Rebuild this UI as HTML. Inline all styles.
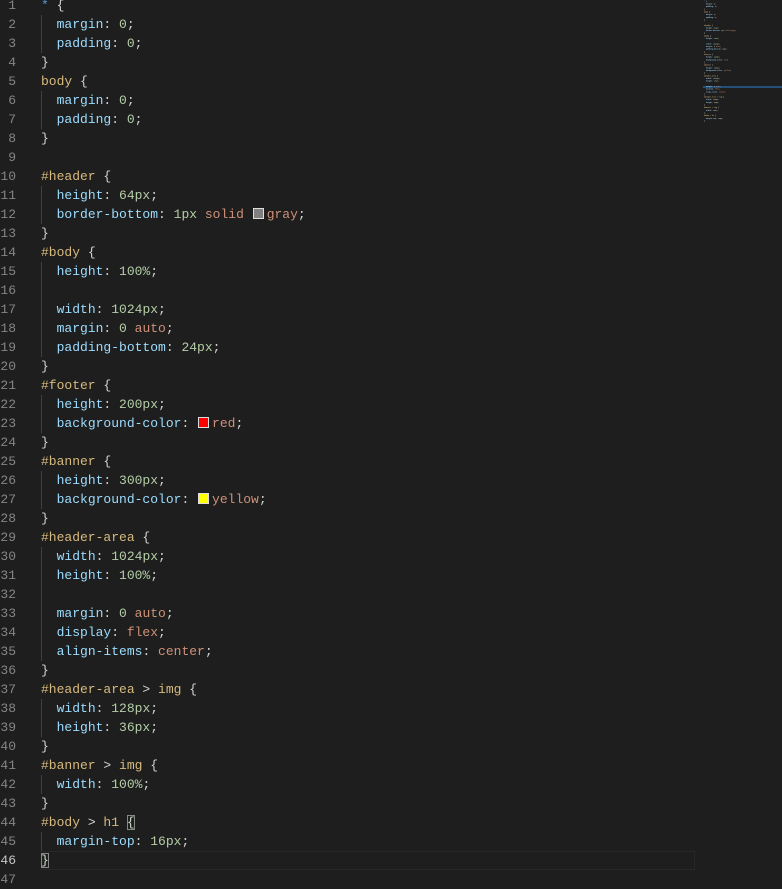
<!DOCTYPE html>
<html><head><meta charset="utf-8"><style>
html,body{margin:0;padding:0;background:#1e1e1e;width:782px;height:876px;overflow:hidden}
.ed{position:absolute;left:0;top:-4px;width:700px;font-family:"Liberation Mono",monospace;font-size:13px;line-height:19px;color:#d4d4d4}
.l{height:19px;position:relative}
.n{position:absolute;left:0;width:16px;text-align:right;color:#858585}
.c{position:absolute;left:41px;white-space:pre}
.s{color:#d7ba7d}.p{color:#9cdcfe}.v{color:#b5cea8}.k{color:#ce9178}.st{color:#569cd6}
.sw{display:inline-block;width:9px;height:9px;border:1px solid #ddd;margin:0 3px 0 1px;vertical-align:-1px}
.g{position:absolute;left:41px;width:1px;background:#404040}
.cur{position:absolute;left:41px;right:87px;top:851px;height:17px;border:1px solid #282828}
.bm{outline:1px solid #888;outline-offset:-1px;background:rgba(0,100,0,.1)}
.mm{position:absolute;left:704px;top:0;transform:scale(0.13,0.14);transform-origin:0 0;opacity:.85}
.mm div div{white-space:pre;height:19px}
</style></head><body>
<div class="cur"></div>
<div class="g" style="top:15px;height:38px"></div>
<div class="g" style="top:91px;height:38px"></div>
<div class="g" style="top:186px;height:38px"></div>
<div class="g" style="top:262px;height:95px"></div>
<div class="g" style="top:395px;height:38px"></div>
<div class="g" style="top:471px;height:38px"></div>
<div class="g" style="top:547px;height:114px"></div>
<div class="g" style="top:699px;height:38px"></div>
<div class="g" style="top:775px;height:19px"></div>
<div class="g" style="top:832px;height:19px"></div>
<div style="position:absolute;left:703px;top:86px;width:79px;height:2px;background:#264f78"></div>
<div class="ed" id="code">
<div class="l"><span class="n">1</span><span class="c"><span class="st">*</span> {</span></div>
<div class="l"><span class="n">2</span><span class="c">  <span class="p">margin</span>: <span class="v">0</span>;</span></div>
<div class="l"><span class="n">3</span><span class="c">  <span class="p">padding</span>: <span class="v">0</span>;</span></div>
<div class="l"><span class="n">4</span><span class="c">}</span></div>
<div class="l"><span class="n">5</span><span class="c"><span class="s">body</span> {</span></div>
<div class="l"><span class="n">6</span><span class="c">  <span class="p">margin</span>: <span class="v">0</span>;</span></div>
<div class="l"><span class="n">7</span><span class="c">  <span class="p">padding</span>: <span class="v">0</span>;</span></div>
<div class="l"><span class="n">8</span><span class="c">}</span></div>
<div class="l"><span class="n">9</span><span class="c"></span></div>
<div class="l"><span class="n">10</span><span class="c"><span class="s">#header</span> {</span></div>
<div class="l"><span class="n">11</span><span class="c">  <span class="p">height</span>: <span class="v">64px</span>;</span></div>
<div class="l"><span class="n">12</span><span class="c">  <span class="p">border-bottom</span>: <span class="v">1px</span> <span class="k">solid</span> <span class="sw" style="background:gray"></span><span class="k">gray</span>;</span></div>
<div class="l"><span class="n">13</span><span class="c">}</span></div>
<div class="l"><span class="n">14</span><span class="c"><span class="s">#body</span> {</span></div>
<div class="l"><span class="n">15</span><span class="c">  <span class="p">height</span>: <span class="v">100%</span>;</span></div>
<div class="l"><span class="n">16</span><span class="c"></span></div>
<div class="l"><span class="n">17</span><span class="c">  <span class="p">width</span>: <span class="v">1024px</span>;</span></div>
<div class="l"><span class="n">18</span><span class="c">  <span class="p">margin</span>: <span class="v">0</span> <span class="k">auto</span>;</span></div>
<div class="l"><span class="n">19</span><span class="c">  <span class="p">padding-bottom</span>: <span class="v">24px</span>;</span></div>
<div class="l"><span class="n">20</span><span class="c">}</span></div>
<div class="l"><span class="n">21</span><span class="c"><span class="s">#footer</span> {</span></div>
<div class="l"><span class="n">22</span><span class="c">  <span class="p">height</span>: <span class="v">200px</span>;</span></div>
<div class="l"><span class="n">23</span><span class="c">  <span class="p">background-color</span>: <span class="sw" style="background:red"></span><span class="k">red</span>;</span></div>
<div class="l"><span class="n">24</span><span class="c">}</span></div>
<div class="l"><span class="n">25</span><span class="c"><span class="s">#banner</span> {</span></div>
<div class="l"><span class="n">26</span><span class="c">  <span class="p">height</span>: <span class="v">300px</span>;</span></div>
<div class="l"><span class="n">27</span><span class="c">  <span class="p">background-color</span>: <span class="sw" style="background:yellow"></span><span class="k">yellow</span>;</span></div>
<div class="l"><span class="n">28</span><span class="c">}</span></div>
<div class="l"><span class="n">29</span><span class="c"><span class="s">#header-area</span> {</span></div>
<div class="l"><span class="n">30</span><span class="c">  <span class="p">width</span>: <span class="v">1024px</span>;</span></div>
<div class="l"><span class="n">31</span><span class="c">  <span class="p">height</span>: <span class="v">100%</span>;</span></div>
<div class="l"><span class="n">32</span><span class="c"></span></div>
<div class="l"><span class="n">33</span><span class="c">  <span class="p">margin</span>: <span class="v">0</span> <span class="k">auto</span>;</span></div>
<div class="l"><span class="n">34</span><span class="c">  <span class="p">display</span>: <span class="k">flex</span>;</span></div>
<div class="l"><span class="n">35</span><span class="c">  <span class="p">align-items</span>: <span class="k">center</span>;</span></div>
<div class="l"><span class="n">36</span><span class="c">}</span></div>
<div class="l"><span class="n">37</span><span class="c"><span class="s">#header-area</span> &gt; <span class="s">img</span> {</span></div>
<div class="l"><span class="n">38</span><span class="c">  <span class="p">width</span>: <span class="v">128px</span>;</span></div>
<div class="l"><span class="n">39</span><span class="c">  <span class="p">height</span>: <span class="v">36px</span>;</span></div>
<div class="l"><span class="n">40</span><span class="c">}</span></div>
<div class="l"><span class="n">41</span><span class="c"><span class="s">#banner</span> &gt; <span class="s">img</span> {</span></div>
<div class="l"><span class="n">42</span><span class="c">  <span class="p">width</span>: <span class="v">100%</span>;</span></div>
<div class="l"><span class="n">43</span><span class="c">}</span></div>
<div class="l"><span class="n">44</span><span class="c"><span class="s">#body</span> &gt; <span class="s">h1</span> <span class="bm">{</span></span></div>
<div class="l"><span class="n">45</span><span class="c">  <span class="p">margin-top</span>: <span class="v">16px</span>;</span></div>
<div class="l"><span class="n" style="color:#c6c6c6">46</span><span class="c"><span class="bm">}</span></span></div>
<div class="l"><span class="n">47</span><span class="c"></span></div>
</div>
<div class="mm" aria-hidden="true">
<div style="font-family:'Liberation Mono',monospace;font-size:13px;line-height:19px;color:#d4d4d4;font-weight:bold">
<div><span class="st">*</span> {</div><div>  <span class="p">margin</span>: <span class="v">0</span>;</div><div>  <span class="p">padding</span>: <span class="v">0</span>;</div><div>}</div><div><span class="s">body</span> {</div><div>  <span class="p">margin</span>: <span class="v">0</span>;</div><div>  <span class="p">padding</span>: <span class="v">0</span>;</div><div>}</div><div> </div><div><span class="s">#header</span> {</div><div>  <span class="p">height</span>: <span class="v">64px</span>;</div><div>  <span class="p">border-bottom</span>: <span class="v">1px</span> <span class="k">solid gray</span>;</div><div>}</div><div><span class="s">#body</span> {</div><div>  <span class="p">height</span>: <span class="v">100%</span>;</div><div> </div><div>  <span class="p">width</span>: <span class="v">1024px</span>;</div><div>  <span class="p">margin</span>: <span class="v">0</span> <span class="k">auto</span>;</div><div>  <span class="p">padding-bottom</span>: <span class="v">24px</span>;</div><div>}</div><div><span class="s">#footer</span> {</div><div>  <span class="p">height</span>: <span class="v">200px</span>;</div><div>  <span class="p">background-color</span>: <span class="k">red</span>;</div><div>}</div><div><span class="s">#banner</span> {</div><div>  <span class="p">height</span>: <span class="v">300px</span>;</div><div>  <span class="p">background-color</span>: <span class="k">yellow</span>;</div><div>}</div><div><span class="s">#header-area</span> {</div><div>  <span class="p">width</span>: <span class="v">1024px</span>;</div><div>  <span class="p">height</span>: <span class="v">100%</span>;</div><div> </div><div>  <span class="p">margin</span>: <span class="v">0</span> <span class="k">auto</span>;</div><div>  <span class="p">display</span>: <span class="k">flex</span>;</div><div>  <span class="p">align-items</span>: <span class="k">center</span>;</div><div>}</div><div><span class="s">#header-area &gt; img</span> {</div><div>  <span class="p">width</span>: <span class="v">128px</span>;</div><div>  <span class="p">height</span>: <span class="v">36px</span>;</div><div>}</div><div><span class="s">#banner &gt; img</span> {</div><div>  <span class="p">width</span>: <span class="v">100%</span>;</div><div>}</div><div><span class="s">#body &gt; h1</span> {</div><div>  <span class="p">margin-top</span>: <span class="v">16px</span>;</div><div>}</div>
</div></div>
</body></html>
